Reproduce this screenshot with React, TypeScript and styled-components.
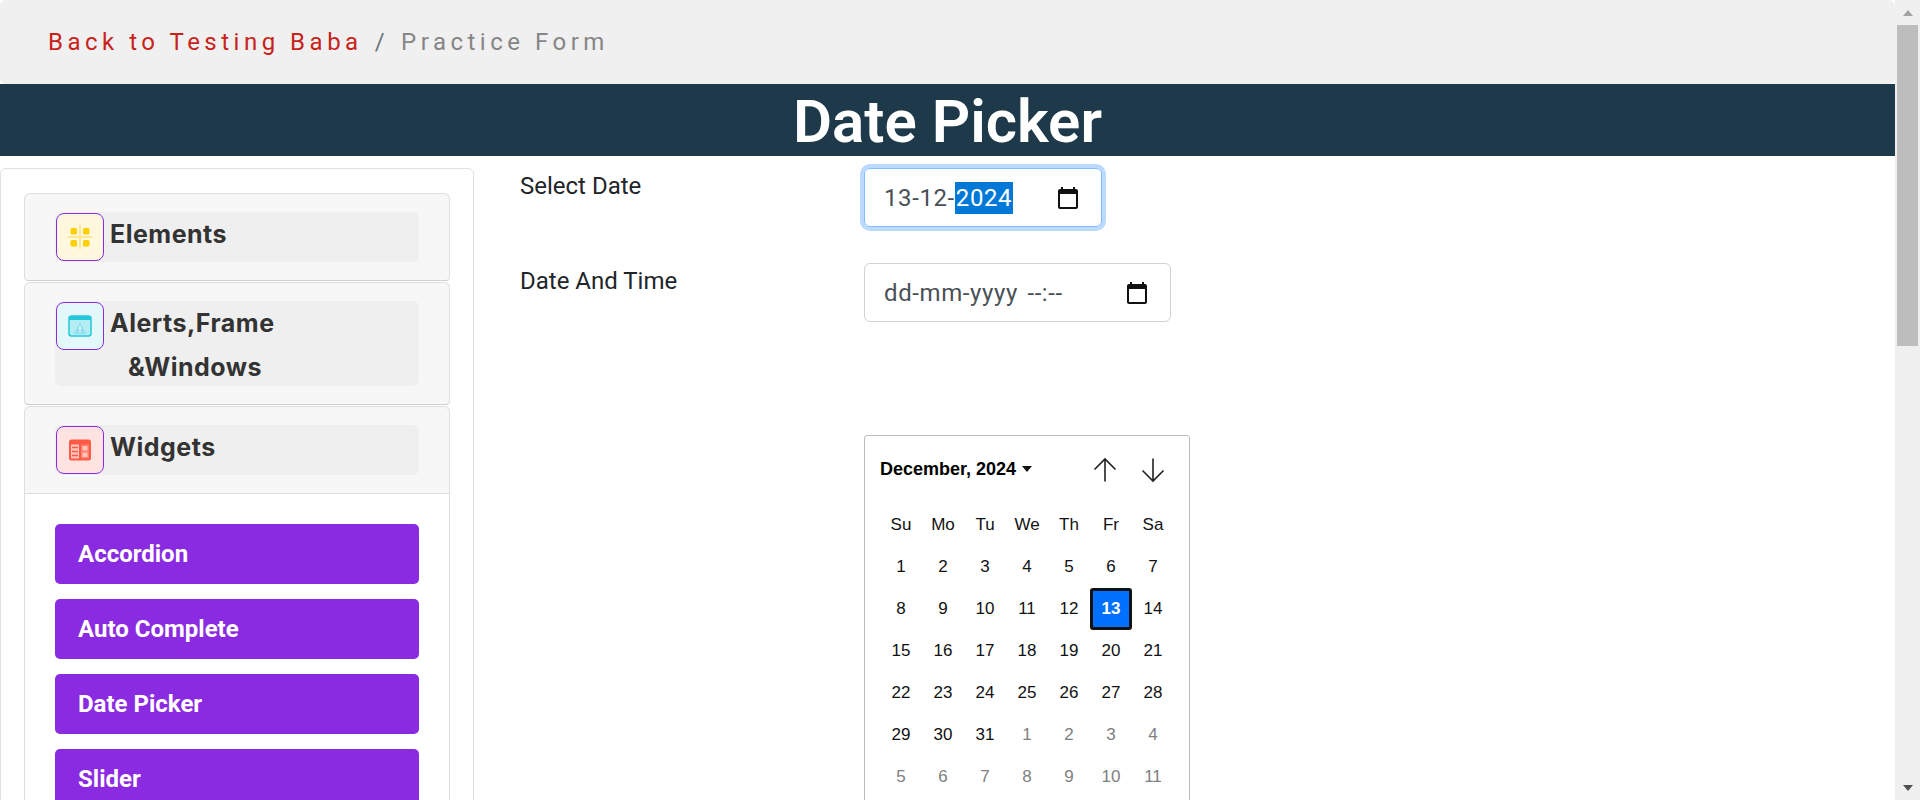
import styled, { createGlobalStyle } from "styled-components";

const GlobalStyle = createGlobalStyle`
  html, body {
    margin: 0;
    height: 800px;
    overflow: hidden;
    background: #fff;
    font-family: Roboto, "Liberation Sans", sans-serif;
  }
  * { box-sizing: border-box; }
`;

const Shell = styled.div`
  display: flex;
  height: 800px;
  width: 1920px;
`;

const Page = styled.div`
  width: 1895px;
  height: 800px;
  overflow: hidden;
`;

const ScrollRail = styled.div`
  width: 25px;
  height: 800px;
  background: #f0f0f0;
  display: flex;
  flex-direction: column;
  align-items: center;
`;

const RailArrow = styled.div<{ $down?: boolean }>`
  height: 25px;
  flex: none;
  display: flex;
  align-items: center;
  justify-content: center;

  &::before {
    content: "";
    border-left: 5.5px solid transparent;
    border-right: 5.5px solid transparent;
    border-${(p) => (p.$down ? "top" : "bottom")}: 6px solid ${(p) => (p.$down ? "#505050" : "#a3a3a3")};
  }
`;

const RailTrack = styled.div`
  flex: 1;
  width: 21px;
`;

const RailThumb = styled.div`
  height: 321px;
  background: #bdbdbd;
`;

const Breadcrumb = styled.nav`
  height: 84px;
  background: #f0f0f0;
  border-radius: 6px;
  padding: 0 48px;
  display: flex;
  align-items: center;
  font-size: 24px;
  letter-spacing: 4.5px;
  color: #868686;
`;

const BackLink = styled.a`
  color: #c8231a;
`;

const Slash = styled.span`
  color: #6c757d;
  margin: 0 12px;
`;

const Banner = styled.h1`
  margin: 0;
  height: 72px;
  background: #1e3a4a;
  color: #fff;
  font-size: 60px;
  line-height: 75px;
  font-weight: 600;
  text-align: center;
`;

const Columns = styled.div`
  display: grid;
  grid-template-columns: 474px 1fr;
  padding-top: 12px;
`;

const Sidebar = styled.aside`
  border: 1px solid #e0e0e0;
  border-radius: 6px;
  padding: 24px 23px;
  height: 1700px;
`;

const AccordionItem = styled.section`
  background: #f7f7f7;
  border: 1px solid #dedede;
  border-bottom-color: #cfcfcf;
  border-radius: 6px 6px 4px 4px;
  margin-bottom: 1px;
`;

const AccordionHead = styled.div`
  padding: 18px 30px;
`;

const HeadInner = styled.div`
  background: #efefef;
  border-radius: 6px;
  display: flex;
  flex-wrap: wrap;
  align-items: flex-start;
  padding: 1px;
  min-height: 50px;
`;

const IconBox = styled.span<{ $bg: string }>`
  width: 48px;
  height: 48px;
  flex: none;
  background: ${(p) => p.$bg};
  border: 1.5px solid #8a2be2;
  border-radius: 8px;
  display: flex;
  align-items: center;
  justify-content: center;
`;

const HeadLabel = styled.span<{ $indent?: boolean }>`
  font-family: Inter, "Liberation Sans", sans-serif;
  font-weight: 700;
  font-size: 25px;
  line-height: 44px;
  letter-spacing: 0.5px;
  color: #333;
  margin: ${(p) => (p.$indent ? "-5px 0 -4px 72px" : "-1px 0 0 6px")};
  flex-basis: ${(p) => (p.$indent ? "100%" : "auto")};
`;

const AccordionBody = styled.div`
  background: #fff;
  border-top: 1px solid #dedede;
  padding: 30px 30px 0;
  display: flex;
  flex-direction: column;
  gap: 15px;
  height: 1100px;
`;

const NavButton = styled.a`
  display: block;
  height: 60px;
  line-height: 60px;
  padding-left: 23px;
  background: #8a2be2;
  color: #fff;
  border-radius: 5px;
  font-size: 24px;
  font-weight: 700;
`;

const Main = styled.main`
  padding-left: 46px;
`;

const FieldRow = styled.div`
  display: grid;
  grid-template-columns: 344px 1fr;
  margin-bottom: 36px;
`;

const FieldLabel = styled.label`
  font-size: 24px;
  line-height: 36px;
  color: #212529;
`;

const DateInput = styled.div<{ $width: number; $focused?: boolean }>`
  width: ${(p) => p.$width}px;
  height: 59px;
  display: flex;
  align-items: center;
  justify-content: space-between;
  padding: 0 21px 0 19px;
  font-size: 24px;
  letter-spacing: 0.6px;
  word-spacing: 3px;
  color: #495057;
  border-radius: 6px;
  border: 1px solid ${(p) => (p.$focused ? "#80bdff" : "#ced4da")};
  box-shadow: ${(p) => (p.$focused ? "0 0 0 4px rgba(0, 123, 255, 0.27)" : "none")};
`;

const DateSelected = styled.span`
  background: #0078d7;
  color: #fff;
  padding: 0 1px;
  line-height: 32px;
  display: inline-block;
`;

const Calendar = styled.div`
  width: 326px;
  height: 420px;
  margin: 113px 0 0 344px;
  border: 1px solid #bbb;
  border-radius: 3px;
  padding: 0 15px;
  font-family: "Liberation Sans", Arial, sans-serif;
  color: #111;
`;

const CalHeader = styled.div`
  height: 68px;
  display: flex;
  align-items: center;
  justify-content: space-between;
`;

const CalTitle = styled.div`
  display: flex;
  align-items: center;
  gap: 6px;
  font-size: 18px;
  font-weight: 700;
  color: #000;
  margin: -2px 0 0;

  &::after {
    content: "";
    border-left: 5px solid transparent;
    border-right: 5px solid transparent;
    border-top: 6px solid #111;
  }
`;

const CalArrows = styled.div`
  display: flex;
  gap: 22px;
  margin-right: 8px;
`;

const CalGrid = styled.div`
  display: grid;
  grid-template-columns: repeat(7, 42px);
  grid-auto-rows: 42px;
`;

const CalCell = styled.div<{ $muted?: boolean; $selected?: boolean }>`
  display: flex;
  align-items: center;
  justify-content: center;
  font-size: 17px;
  color: ${(p) => (p.$selected ? "#fff" : p.$muted ? "#808080" : "#111")};
  font-weight: ${(p) => (p.$selected ? 700 : 400)};
  background: ${(p) => (p.$selected ? "#0071ff" : "transparent")};
  border: ${(p) => (p.$selected ? "3px solid #111" : "none")};
  border-radius: ${(p) => (p.$selected ? "3px" : "0")};
`;

const CalendarGlyph = () => (
  <svg width="24" height="24" viewBox="0 0 24 24" fill="#111">
    <path d="M20 3h-1V1h-2v2H7V1H5v2H4c-1.1 0-2 .9-2 2v16c0 1.1.9 2 2 2h16c1.1 0 2-.9 2-2V5c0-1.1-.9-2-2-2zm0 18H4V8h16v13z" />
  </svg>
);

const ElementsIcon = () => (
  <svg width="24" height="24" viewBox="0 0 24 24">
    <path d="M12 0v24M0 12h24" stroke="#ffe78f" strokeWidth="2" />
    <rect x="2.500" y="3" width="6.500" height="6.500" rx="1.500" fill="#ffd000" />
    <rect x="15" y="3" width="6.500" height="6.500" rx="1.500" fill="#ffd000" />
    <rect x="2.500" y="15" width="6.500" height="6.500" rx="1.500" fill="#ffd000" />
    <rect x="15" y="15" width="6.500" height="6.500" rx="1.500" fill="#ffd000" />
  </svg>
);

const AlertsIcon = () => (
  <svg width="24" height="24" viewBox="0 0 24 24">
    <rect x="1" y="2" width="22" height="20" rx="2.500" fill="#b5edf5" stroke="#26c6da" strokeWidth="1.500" />
    <path d="M1 5a3 3 0 0 1 3-3h16a3 3 0 0 1 3 3v1H1z" fill="#26c6da" />
    <path d="M12 8l6.500 12h-13z" fill="#8fe0ec" />
    <path d="M12 12v4M12 17v1.500" stroke="#e3f8fb" strokeWidth="1.600" />
  </svg>
);

const WidgetsIcon = () => (
  <svg width="24" height="24" viewBox="0 0 24 24">
    <rect x="1" y="1.500" width="22" height="21" rx="2.500" fill="#ff5a45" />
    <rect x="3" y="6.500" width="8" height="14" fill="#ffc4bc" />
    <rect x="13" y="6.500" width="8" height="14" fill="#ff7f6f" />
    <path d="M4 9.500h6M4 13.500h6M4 17.500h6" stroke="#ff5a45" strokeWidth="1.500" />
    <rect x="14.500" y="8" width="5" height="4.500" fill="#ffc4bc" />
    <rect x="14.500" y="14.500" width="5" height="4.500" fill="#ffc4bc" />
  </svg>
);

const ArrowGlyph = ({ down }: { down?: boolean }) => (
  <svg width="26" height="26" viewBox="0 0 26 26" fill="none" stroke="#222" strokeWidth="1.600">
    {down ? <path d="M13 1.500v22.500M2.500 13.500L13 24l10.500-10.500" /> : <path d="M13 24.500V2M2.500 12.500L13 2l10.500 10.500" />}
  </svg>
);

const weekDays = ["Su", "Mo", "Tu", "We", "Th", "Fr", "Sa"];
const monthDays = Array.from({ length: 31 }, (_, i) => i + 1);
const nextDays = Array.from({ length: 11 }, (_, i) => i + 1);
const navLinks = ["Accordion", "Auto Complete", "Date Picker", "Slider"];

const App = () => {
  return (
    <Shell>
      <GlobalStyle />
      <Page>
        <Breadcrumb>
          <BackLink>Back to Testing Baba</BackLink>
          <Slash>/</Slash>
          <span>Practice Form</span>
        </Breadcrumb>
        <Banner>Date Picker</Banner>
        <Columns>
          <Sidebar>
            <AccordionItem>
              <AccordionHead>
                <HeadInner>
                  <IconBox $bg="#fff8df">
                    <ElementsIcon />
                  </IconBox>
                  <HeadLabel>Elements</HeadLabel>
                </HeadInner>
              </AccordionHead>
            </AccordionItem>
            <AccordionItem>
              <AccordionHead>
                <HeadInner>
                  <IconBox $bg="#e3f8fb">
                    <AlertsIcon />
                  </IconBox>
                  <HeadLabel>Alerts,Frame</HeadLabel>
                  <HeadLabel $indent>&amp;Windows</HeadLabel>
                </HeadInner>
              </AccordionHead>
            </AccordionItem>
            <AccordionItem>
              <AccordionHead>
                <HeadInner>
                  <IconBox $bg="#ffe3e0">
                    <WidgetsIcon />
                  </IconBox>
                  <HeadLabel>Widgets</HeadLabel>
                </HeadInner>
              </AccordionHead>
              <AccordionBody>
                {navLinks.map((link) => (
                  <NavButton key={link}>{link}</NavButton>
                ))}
              </AccordionBody>
            </AccordionItem>
          </Sidebar>
          <Main>
            <FieldRow>
              <FieldLabel>Select Date</FieldLabel>
              <DateInput $width={238} $focused>
                <span>
                  13-12-<DateSelected>2024</DateSelected>
                </span>
                <CalendarGlyph />
              </DateInput>
            </FieldRow>
            <FieldRow>
              <FieldLabel>Date And Time</FieldLabel>
              <DateInput $width={307}>
                <span>dd-mm-yyyy --:--</span>
                <CalendarGlyph />
              </DateInput>
            </FieldRow>
            <Calendar>
              <CalHeader>
                <CalTitle>December, 2024</CalTitle>
                <CalArrows>
                  <ArrowGlyph />
                  <ArrowGlyph down />
                </CalArrows>
              </CalHeader>
              <CalGrid>
                {weekDays.map((d) => (
                  <CalCell key={d}>{d}</CalCell>
                ))}
                {monthDays.map((d) => (
                  <CalCell key={d} $selected={d === 13}>
                    {d}
                  </CalCell>
                ))}
                {nextDays.map((d) => (
                  <CalCell key={`next-${d}`} $muted>
                    {d}
                  </CalCell>
                ))}
              </CalGrid>
            </Calendar>
          </Main>
        </Columns>
      </Page>
      <ScrollRail>
        <RailArrow />
        <RailTrack>
          <RailThumb />
        </RailTrack>
        <RailArrow $down />
      </ScrollRail>
    </Shell>
  );
};

export default App;
